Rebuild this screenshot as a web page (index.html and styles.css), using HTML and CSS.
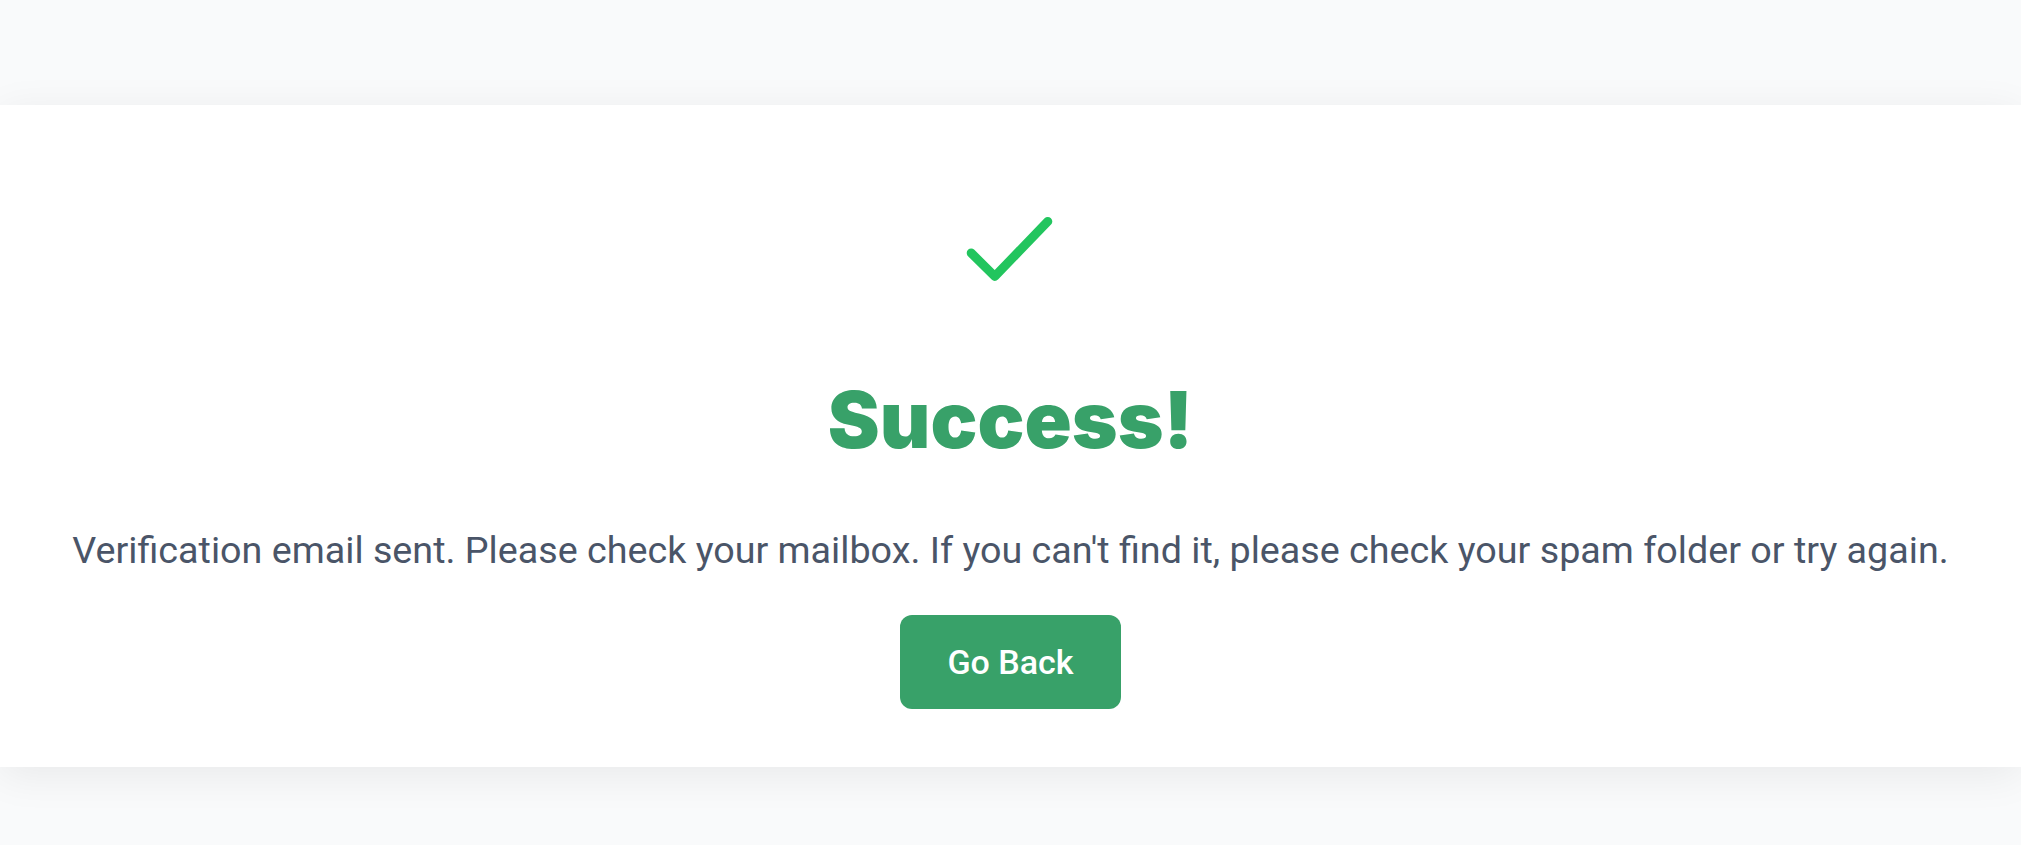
FILE: index.html
```html
<!DOCTYPE html>
<html lang="en">
<head>
<meta charset="utf-8">
<title>Success</title>
<link rel="stylesheet" href="styles.css">
</head>
<body>
<div class="page">
  <div class="top-space"></div>
  <main class="card">
    <svg class="check" width="96" height="76" viewBox="0 0 96 76" aria-hidden="true">
      <path d="M8.2 42 L31.8 65.4 L84.8 10.4" fill="none" stroke="#22c55e" stroke-width="9" stroke-linecap="round" stroke-linejoin="round"/>
    </svg>
    <h1 class="title">Success!</h1>
    <p class="message">Verification email sent. Please check your mailbox. If you can't find it, please check your spam folder or try again.</p>
    <a class="btn" href="#">Go Back</a>
  </main>
  <div class="bottom-space"></div>
</div>
</body>
</html>
```
FILE: styles.css
```css
html, body {
  margin: 0;
  padding: 0;
  background: #f9fafb;
}
.page {
  display: flex;
  flex-direction: column;
  min-height: 845px;
}
.top-space {
  height: 105px;
}
.card {
  position: relative;
  background: #ffffff;
  box-shadow: 0 8px 40px rgba(0, 0, 0, 0.07);
  display: flex;
  flex-direction: column;
  align-items: center;
  padding: 106px 0 58px;
  height: 662px;
  box-sizing: border-box;
}
.check {
  display: block;
}
.title {
  margin: 94px 0 0;
  font-family: Inter, "Liberation Sans", sans-serif;
  font-weight: 900;
  font-size: 78px;
  line-height: 78px;
  color: #38a169;
  letter-spacing: 0;
}
.message {
  margin: 64px 0 0;
  font-family: Roboto, "Liberation Sans", sans-serif;
  font-size: 37.7px;
  line-height: 54px;
  color: #4a5568;
  white-space: nowrap;
}
.btn {
  margin-top: 38px;
  display: block;
  background: #38a169;
  color: #ffffff;
  text-decoration: none;
  font-family: Roboto, "Liberation Sans", sans-serif;
  font-weight: 500;
  font-size: 34px;
  line-height: 46px;
  padding: 24px 47px;
  border-radius: 12px;
}
.bottom-space {
  flex: 1;
}
```
